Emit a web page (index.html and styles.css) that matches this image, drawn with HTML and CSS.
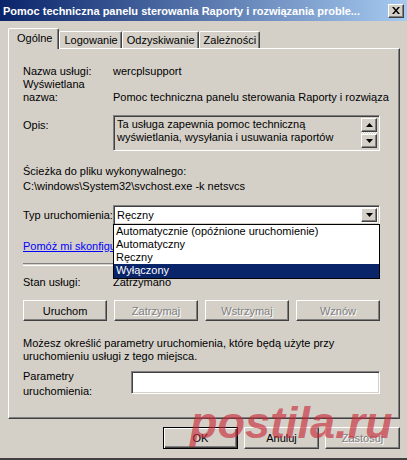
FILE: index.html
```html
<!DOCTYPE html>
<html lang="pl">
<head>
    <meta charset="UTF-8">
    <title>Właściwości usługi</title>
    <link rel="stylesheet" href="styles.css">
</head>
<body>
    <div class="window">
        <div class="titlebar">
            <span class="title">Pomoc techniczna panelu sterowania Raporty i rozwiązania proble...</span>
            <span class="close-btn">
                <svg width="8" height="7" viewBox="0 0 8 7"><path d="M0 0h2l2 2.5L6 0h2L5 3.5 8 7H6L4 4.5 2 7H0l3-3.5z" fill="#000"/></svg>
            </span>
        </div>

        <div class="tabs">
            <div class="tab active">Ogólne</div>
            <div class="tab">Logowanie</div>
            <div class="tab">Odzyskiwanie</div>
            <div class="tab">Zależności</div>
        </div>

        <div class="panel">
            <div class="field first">
                <span>Nazwa usługi:</span>
                <span>wercplsupport</span>
            </div>

            <div class="field">
                <span>Wyświetlana<br>nazwa:</span>
                <span class="bottom">Pomoc techniczna panelu sterowania Raporty i rozwiąza</span>
            </div>

            <div class="field desc-row">
                <span class="desc-label">Opis:</span>
                <div class="desc-box">
                    <div class="desc-text">Ta usługa zapewnia pomoc techniczną<br>wyświetlania, wysyłania i usuwania raportów</div>
                    <div class="scroll">
                        <span class="scroll-btn"><svg width="7" height="4" viewBox="0 0 7 4"><path d="M3.5 0L7 4H0z" fill="#000"/></svg></span>
                        <span class="scroll-track"></span>
                        <span class="scroll-btn"><svg width="7" height="4" viewBox="0 0 7 4"><path d="M0 0h7L3.5 4z" fill="#000"/></svg></span>
                    </div>
                </div>
            </div>

            <p class="path-label">Ścieżka do pliku wykonywalnego:</p>
            <p class="path">C:\windows\System32\svchost.exe -k netsvcs</p>

            <div class="field startup-row">
                <span>Typ uruchomienia:</span>
                <div class="combo">
                    <span class="combo-value">Ręczny</span>
                    <span class="combo-btn"><svg width="7" height="4" viewBox="0 0 7 4"><path d="M0 0h7L3.5 4z" fill="#000"/></svg></span>
                    <ul class="dropdown">
                        <li>Automatycznie (opóźnione uruchomienie)</li>
                        <li>Automatyczny</li>
                        <li>Ręczny</li>
                        <li class="selected">Wyłączony</li>
                    </ul>
                </div>
            </div>

            <a class="help-link" href="#">Pomóż mi skonfigurować opcje odzyskiwania usługi.</a>

            <div class="separator"></div>

            <div class="field status-row">
                <span>Stan usługi:</span>
                <span>Zatrzymano</span>
            </div>

            <div class="service-buttons">
                <button class="btn">Uruchom</button>
                <button class="btn" disabled>Zatrzymaj</button>
                <button class="btn" disabled>Wstrzymaj</button>
                <button class="btn" disabled>Wznów</button>
            </div>

            <p class="hint">Możesz określić parametry uruchomienia, które będą użyte przy<br>uruchomieniu usługi z tego miejsca.</p>

            <div class="params-row">
                <span class="params-label">Parametry<br>uruchomienia:</span>
                <input class="params-input" type="text">
            </div>
        </div>

        <div class="dialog-buttons">
            <button class="btn default">OK</button>
            <button class="btn">Anuluj</button>
            <button class="btn" disabled>Zastosuj</button>
        </div>

        <div class="watermark">postila.ru</div>
    </div>
</body>
</html>
```

FILE: styles.css
```css
/* General Styles */
body {
    margin: 0;
    background-color: #d4d0c8;
    font-family: 'Liberation Sans', Arial, sans-serif;
    font-size: 11px;
    line-height: 13px;
    color: #000;
}

p {
    margin: 0;
}

/* Window */
.window {
    position: relative;
    width: 407px;
    height: 460px;
    box-sizing: border-box;
    border-bottom: 2px solid #404040;
    background-color: #d4d0c8;
    overflow: hidden;
}

.titlebar {
    height: 21px;
    display: flex;
    align-items: center;
    justify-content: space-between;
    padding: 0 3px 0 3px;
    background: linear-gradient(to right, #0a246a, #a6caf0);
}

.title {
    color: #fff;
    font-weight: bold;
    font-size: 11px;
    white-space: nowrap;
    margin-top: 1px;
}

.close-btn {
    width: 14px;
    height: 12px;
    display: flex;
    align-items: center;
    justify-content: center;
    background-color: #d4d0c8;
    border: 1px solid;
    border-color: #fff #404040 #404040 #fff;
    box-shadow: inset -1px -1px #808080;
}

/* Tabs */
.tabs {
    display: flex;
    align-items: flex-end;
    height: 20px;
    margin-top: 7px;
    padding-left: 8px;
    position: relative;
    z-index: 1;
}

.tab {
    height: 16px;
    padding: 0 3px 0 4px;
    display: flex;
    align-items: center;
    border-left: 1px solid #fff;
    border-top: 1px solid #fff;
    border-right: 1px solid #404040;
    box-shadow: inset -1px 0 #808080;
    border-radius: 2px 2px 0 0;
    background-color: #d4d0c8;
}

.tab.active {
    height: 20px;
    margin-bottom: -1px;
    padding: 0 6px 0 8px;
    align-items: flex-start;
    line-height: 18px;
}

/* Panel */
.panel {
    margin-left: 8px;
    width: 392px;
    height: 371px;
    box-sizing: border-box;
    border: 1px solid;
    border-color: #fff #404040 #404040 #fff;
    box-shadow: inset -1px -1px #808080;
    padding: 0 19px 0 14px;
    display: flex;
    flex-direction: column;
}

.field {
    display: grid;
    grid-template-columns: 90px 1fr;
    align-items: start;
}

.field.first {
    margin-top: 16px;
}

.field .bottom {
    align-self: end;
    white-space: nowrap;
}

/* Description */
.desc-row {
    margin-top: 11px;
}

.desc-label {
    margin-top: 4px;
}

.desc-box {
    height: 36px;
    box-sizing: border-box;
    display: flex;
    border: 1px solid;
    border-color: #808080 #fff #fff #808080;
    box-shadow: inset 1px 1px #404040, inset -1px -1px #d4d0c8;
    padding: 2px 2px 2px 3px;
}

.desc-text {
    flex: 1;
}

.scroll {
    width: 16px;
    display: flex;
    flex-direction: column;
}

.scroll-btn {
    height: 14px;
    box-sizing: border-box;
    display: flex;
    align-items: center;
    justify-content: center;
    border: 1px solid;
    border-color: #fff #404040 #404040 #fff;
    box-shadow: inset -1px -1px #808080;
}

.scroll-track {
    flex: 1;
    background-image: repeating-conic-gradient(#fff 0 25%, #d4d0c8 0 50%);
    background-size: 2px 2px;
}

/* Path */
.path-label {
    margin-top: 14px;
}

.path {
    margin-top: 2px;
}

/* Startup type */
.startup-row {
    margin-top: 12px;
    align-items: center;
}

.combo {
    position: relative;
    height: 20px;
    box-sizing: border-box;
    display: flex;
    align-items: center;
    background-color: #fff;
    border: 1px solid;
    border-color: #808080 #fff #fff #808080;
    box-shadow: inset 1px 1px #404040, inset -1px -1px #d4d0c8;
    padding: 0 2px 0 3px;
}

.combo-value {
    flex: 1;
}

.combo-btn {
    width: 16px;
    height: 14px;
    box-sizing: border-box;
    display: flex;
    align-items: center;
    justify-content: center;
    background-color: #d4d0c8;
    border: 1px solid;
    border-color: #fff #404040 #404040 #fff;
    box-shadow: inset -1px -1px #808080;
}

.dropdown {
    position: absolute;
    top: 18px;
    left: -1px;
    right: -1px;
    margin: 0;
    padding: 0;
    list-style: none;
    background-color: #fff;
    border: 1px solid #000;
    z-index: 2;
}

.dropdown li {
    height: 13px;
    padding-left: 2px;
}

.dropdown li.selected {
    background-color: #0a246a;
    color: #fff;
    height: 14px;
}

/* Help link */
.help-link {
    margin-top: 15px;
    color: #0000ff;
    white-space: nowrap;
}

.separator {
    margin-top: 10px;
    height: 1px;
    border-top: 1px solid #808080;
    border-bottom: 1px solid #fff;
}

.status-row {
    margin-top: 10px;
}

/* Service buttons */
.btn {
    height: 21px;
    width: 84px;
    padding: 0;
    box-sizing: border-box;
    font-family: inherit;
    font-size: 11px;
    color: #000;
    background-color: #d4d0c8;
    border: 1px solid;
    border-color: #fff #404040 #404040 #fff;
    box-shadow: inset -1px -1px #808080;
}

.btn:disabled {
    color: #808080;
    text-shadow: 1px 1px #fff;
}

.service-buttons {
    display: flex;
    justify-content: space-between;
    margin-top: 11px;
}

.hint {
    margin-top: 16px;
}

/* Parameters */
.params-row {
    display: grid;
    grid-template-columns: 108px 1fr;
    margin-top: 6px;
}

.params-label {
    line-height: 15px;
}

.params-input {
    margin-top: 2px;
    height: 23px;
    box-sizing: border-box;
    border: 1px solid;
    border-color: #808080 #fff #fff #808080;
    box-shadow: inset 1px 1px #404040, inset -1px -1px #d4d0c8;
    background-color: #fff;
    outline: none;
}

/* Dialog buttons */
.dialog-buttons {
    display: flex;
    justify-content: flex-end;
    gap: 6px;
    padding-right: 7px;
    margin-top: 8px;
}

.dialog-buttons .btn {
    width: 75px;
    height: 22px;
}

.dialog-buttons .btn.default {
    border: 1px solid #000;
    box-shadow: inset 1px 1px #fff, inset -1px -1px #404040, inset -2px -2px #808080;
}

/* Overlay */
.watermark {
    position: absolute;
    left: 190px;
    top: 400px;
    font-family: 'Liberation Sans', Arial, sans-serif;
    font-size: 45px;
    line-height: 45px;
    font-weight: bold;
    font-style: italic;
    color: rgba(200, 40, 55, 0.65);
    pointer-events: none;
}
```
